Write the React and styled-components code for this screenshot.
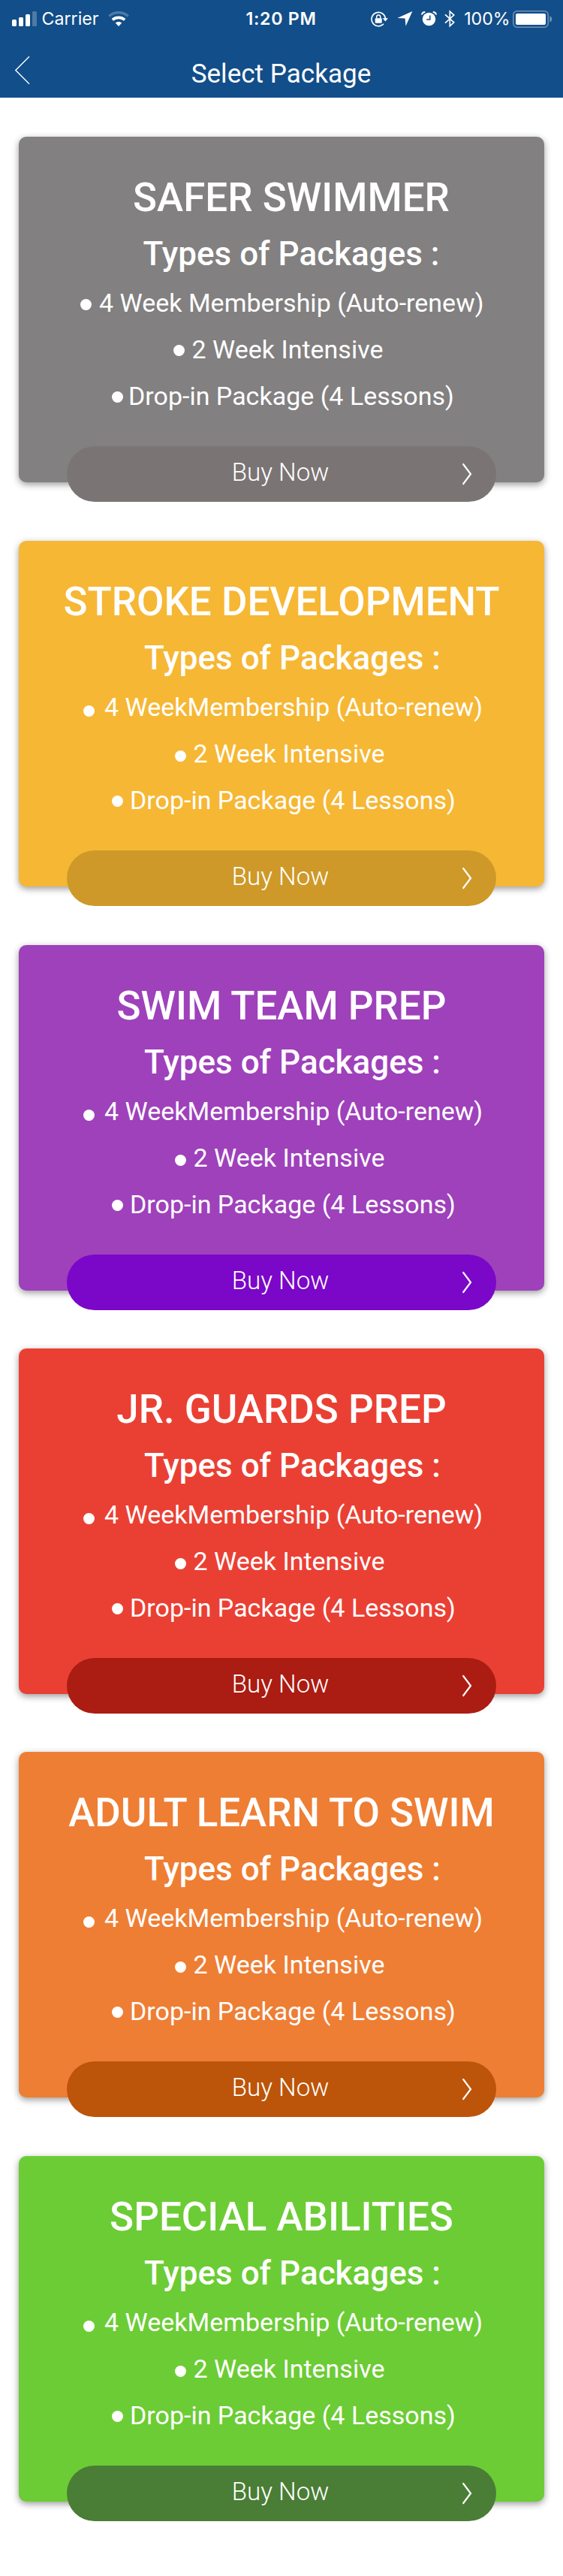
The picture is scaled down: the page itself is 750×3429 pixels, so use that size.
import React from 'react';
import styled, { createGlobalStyle } from 'styled-components';

const GlobalStyle = createGlobalStyle`
  * { box-sizing: border-box; }
  body { margin: 0; background: #fff; }
`;

const Screen = styled.main`
  width: 750px;
  min-height: 3429px;
  background: #fff;
  color: #fff;
  font-family: Roboto, "Liberation Sans", sans-serif;
  white-space: nowrap;
`;

const Header = styled.header`
  height: 130px;
  background: #124e89;
`;

const StatusBar = styled.div`
  display: grid;
  grid-template-columns: 1fr auto 1fr;
  align-items: center;
  height: 50px;
  padding: 0 14px 0 16px;
  font-family: Inter, "Liberation Sans", sans-serif;
  font-size: 23.2px;
  line-height: 50px;
`;

const StatusGroup = styled.div`
  display: flex;
  align-items: center;
  height: 50px;
  justify-content: ${(p) => (p.$end ? 'flex-end' : 'flex-start')};
`;

const Glyph = styled.svg`
  display: block;
  flex: none;
  margin-left: ${(p) => p.$gap || 0}px;
`;

const Carrier = styled.span`
  margin-left: 6.5px;
`;

const Clock = styled.span`
  margin-right: 3px;
  font-weight: 600;
  letter-spacing: 0.73px;
`;

const Percent = styled.span`
  margin: 0 3.4px 0 11.5px;
`;

const NavBar = styled.div`
  display: grid;
  grid-template-columns: 59px 1fr 60px;
  align-items: center;
  height: 80px;
`;

const BackButton = styled.button`
  display: flex;
  height: 80px;
  padding: 24px 0 0 19px;
  border: 0;
  background: none;
`;

const NavTitle = styled.h1`
  height: 80px;
  margin: 0;
  font-size: 35.1px;
  font-weight: 400;
  line-height: 96px;
  text-align: center;
`;

const PackageList = styled.div`
  display: flex;
  flex-direction: column;
  padding: 52px 25px 0;
`;

const Card = styled.section`
  display: flex;
  flex-direction: column;
  height: 460px;
  margin-bottom: ${(p) => p.$gap}px;
  padding-top: 41px;
  border-radius: 10px;
  background: ${(p) => p.$color};
  box-shadow: 0 3px 10px rgba(0, 0, 0, 0.4);
`;

const CardTitle = styled.h2`
  flex: none;
  margin: 0 0 5px;
  padding-left: ${(p) => p.$shift}px;
  font-size: 52.9px;
  font-weight: 500;
  line-height: 80px;
  text-align: center;
`;

const CardSubtitle = styled.h3`
  flex: none;
  margin: 0 0 4px;
  padding-left: ${(p) => p.$shift}px;
  font-size: 44px;
  font-weight: 500;
  line-height: 60px;
  text-align: center;
`;

const Options = styled.ul`
  flex: none;
  margin: 0 0 35.7px;
  padding: 0;
  list-style: none;
`;

const Option = styled.li`
  display: flex;
  align-items: flex-start;
  height: 62px;
  padding-left: ${(p) => p.$inset}px;
  font-size: 34px;
  line-height: 62px;
`;

const Bullet = styled.span`
  flex: none;
  width: 15px;
  height: 15px;
  margin-top: ${(p) => p.$top}px;
  margin-right: ${(p) => p.$gap}px;
  border-radius: 50%;
  background: #fff;
`;

const BuyButton = styled.button`
  display: grid;
  grid-template-columns: 45px 1fr 48px;
  align-items: center;
  flex: none;
  align-self: center;
  width: 572px;
  height: 74.5px;
  padding: 0;
  border: 0;
  border-radius: 37.5px;
  background: ${(p) => p.$color};
  color: #fff;
  font: 300 33.2px/69px Roboto, "Liberation Sans", sans-serif;
`;

const BuyLabel = styled.span`
  grid-column: 2;
  height: 74px;
`;

const packages = [
  { title: 'SAFER SWIMMER', color: '#828080', button: '#7a7574', gap: 78, first: true },
  { title: 'STROKE DEVELOPMENT', color: '#f6b734', button: '#ce9928', gap: 78 },
  { title: 'SWIM TEAM PREP', color: '#9e41bb', button: '#7b07c8', gap: 77 },
  { title: 'JR. GUARDS PREP', color: '#ea4034', button: '#ab1c12', gap: 77 },
  { title: 'ADULT LEARN TO SWIM', color: '#ee7e34', button: '#bc540a', gap: 78 },
  { title: 'SPECIAL ABILITIES', color: '#6ccc35', button: '#4a7d35', gap: 0 },
];

const firstOptions = [
  { text: '4 Week Membership (Auto-renew)', inset: 82, top: 26, gap: 10 },
  { text: '2 Week Intensive', inset: 205.5, top: 25, gap: 10 },
  { text: 'Drop-in Package (4 Lessons)', inset: 124, top: 25, gap: 7 },
];

const commonOptions = [
  { text: '4 WeekMembership (Auto-renew)', inset: 86, top: 29, gap: 13 },
  { text: '2 Week Intensive', inset: 208, top: 27, gap: 9.5 },
  { text: 'Drop-in Package (4 Lessons)', inset: 124, top: 25, gap: 9 },
];

function Signal() {
  return (
    <Glyph width="33" height="20" viewBox="0 0 33 20" fill="#fff">
      <rect x="0" y="11" width="6" height="9" rx="1.6" />
      <rect x="9" y="8" width="6" height="12" rx="1.6" />
      <rect x="18" y="4" width="6" height="16" rx="1.6" />
      <rect x="27" y="0" width="6" height="20" rx="1.6" opacity=".25" />
    </Glyph>
  );
}

function Wifi() {
  return (
    <Glyph $gap={12} width="28" height="20" viewBox="0 0 28 20" fill="none" stroke="#fff">
      <path d="M1.3 6.6C8.2.2 19.8.2 26.7 6.6" strokeWidth="3.4" opacity=".25" />
      <path d="M5.8 11.4C10.4 7.4 17.6 7.4 22.2 11.4" strokeWidth="3.6" />
      <path d="M14 20L9.7 15.6C12 13.4 16 13.4 18.3 15.6Z" fill="#fff" stroke="none" />
    </Glyph>
  );
}

function RotationLock() {
  return (
    <Glyph width="23" height="21" viewBox="0 0 23 21" fill="none" stroke="#fff">
      <path d="M17 16.8A9.2 9.2 0 1 1 19.4 10" strokeWidth="1.7" />
      <path d="M15.7 9.3H23L19.3 13.4Z" fill="#fff" stroke="none" />
      <rect x="5.7" y="9.2" width="9" height="6.5" rx="1" fill="#fff" stroke="none" />
      <path d="M7.7 9.5V7.4a2.5 2.5 0 0 1 5 0V9.5" strokeWidth="1.5" />
    </Glyph>
  );
}

function Location() {
  return (
    <Glyph $gap={12} width="21" height="20" viewBox="0 0 21 20" fill="#fff">
      <path d="M20.4 0L11.5 19.7L10.6 9.6L.4 9Z" />
    </Glyph>
  );
}

function Alarm() {
  return (
    <Glyph $gap={11} width="21" height="20" viewBox="0 0 21 20" fill="#fff">
      <circle cx="10.5" cy="10.5" r="8.7" />
      <path d="M.8 4.6Q1.5 1.3 5.3 1" stroke="#fff" strokeWidth="1.9" fill="none" />
      <path d="M20.2 4.6Q19.5 1.3 15.7 1" stroke="#fff" strokeWidth="1.9" fill="none" />
      <path d="M11.8 5.5V11H7.3" stroke="#124e89" strokeWidth="1.5" fill="none" />
    </Glyph>
  );
}

function Bluetooth() {
  return (
    <Glyph $gap={10} width="15" height="24" viewBox="0 0 15 24" fill="none" stroke="#fff" strokeWidth="1.7">
      <path d="M1 6.3L12.7 16.8L7.3 21.7V2.2L12.7 7.1L1 17.6" />
    </Glyph>
  );
}

function Battery() {
  return (
    <Glyph width="53" height="23" viewBox="0 0 53 23">
      <rect x=".8" y=".8" width="46.4" height="21.4" rx="5" fill="none" stroke="#fff" strokeWidth="1.5" opacity=".4" />
      <rect x="4" y="4" width="40" height="15" rx="2" fill="#fff" />
      <path d="M49.3 7.5C53.3 8.5 53.3 14.5 49.3 15.5Z" fill="#fff" opacity=".4" />
    </Glyph>
  );
}

export default function App() {
  return (
    <Screen>
      <GlobalStyle />
      <Header>
        <StatusBar>
          <StatusGroup>
            <Signal />
            <Carrier>Carrier</Carrier>
            <Wifi />
          </StatusGroup>
          <Clock>1:20 PM</Clock>
          <StatusGroup $end>
            <RotationLock />
            <Location />
            <Alarm />
            <Bluetooth />
            <Percent>100%</Percent>
            <Battery />
          </StatusGroup>
        </StatusBar>
        <NavBar>
          <BackButton aria-label="Back">
            <Glyph width="22" height="40" viewBox="0 0 22 40" fill="none" stroke="#fff" strokeWidth="1.4">
              <path d="M20 1.2L1.8 19.5L20 37.8" />
            </Glyph>
          </BackButton>
          <NavTitle>Select Package</NavTitle>
        </NavBar>
      </Header>
      <PackageList>
        {packages.map(({ title, color, button, gap, first }) => (
          <Card key={title} $color={color} $gap={gap}>
            <CardTitle $shift={first ? 26 : 0}>{title}</CardTitle>
            <CardSubtitle $shift={first ? 26 : 29}>Types of Packages :</CardSubtitle>
            <Options>
              {(first ? firstOptions : commonOptions).map((o) => (
                <Option key={o.text} $inset={o.inset}>
                  <Bullet $top={o.top} $gap={o.gap} />
                  {o.text}
                </Option>
              ))}
            </Options>
            <BuyButton $color={button}>
              <BuyLabel>Buy Now</BuyLabel>
              <Glyph width="18" height="30" viewBox="0 0 18 30" fill="none" stroke="#fff" strokeWidth="2.2" strokeLinecap="round">
                <path d="M4.2 2L14 15L4.2 28" />
              </Glyph>
            </BuyButton>
          </Card>
        ))}
      </PackageList>
    </Screen>
  );
}
